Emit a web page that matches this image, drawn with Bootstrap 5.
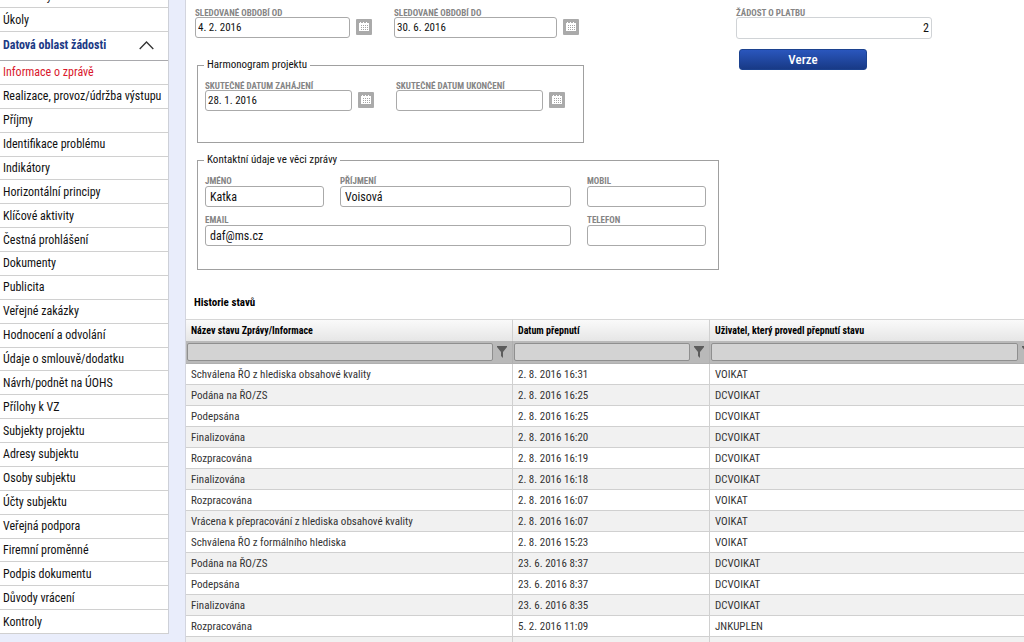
<!DOCTYPE html>
<html lang="cs">
<head>
<meta charset="utf-8">
<meta name="viewport" content="width=device-width, initial-scale=1">
<title>Informace o zprávě</title>
<link href="https://cdn.jsdelivr.net/npm/bootstrap@5.3.0/dist/css/bootstrap.min.css" rel="stylesheet">
<style>
body{font-family:"Roboto Condensed","Liberation Sans Narrow",Roboto,sans-serif;font-size:12px;line-height:16px;color:#111;background:#e9edfb}
.shell{height:100vh}
.side{width:169px}
.side-box{background:#fff;border-right:1px solid #cdd0d8}
.side-box a{color:#111;text-decoration:none;padding:0 3px;border-bottom:1px solid #d0d0d0;white-space:nowrap}
.side-top{height:24px}
.side-first{margin-top:-16px}
.side-box .side-head{height:29px;color:#1c3a85;font-weight:700;border-bottom:1px solid #a9a9ad;padding:0 14px 2px 3px}
.side-list{display:grid;grid-auto-rows:1fr;height:573px}
.side-list a.current{color:#d9182d}
.main-pane{margin-left:16px;background:#fff;border-left:1px solid #d3d5de}
.form-area{padding:8px 0 0 9px}
.lbl{display:block;font-size:9px;line-height:11px;height:9px;font-weight:700;color:#858585;text-transform:uppercase;white-space:nowrap}
.g2 .lbl{height:10px}
.box{display:block;width:100%;height:21px;border:1px solid #aaa;border-radius:3px;padding:0 2px;font-size:11px;line-height:16px;color:#111;background:#fff}
.box.inset{padding:0 4px;font-size:12px}
.pay .box{border-color:#d0d3d6;height:22px;font-size:12px}
.cal{width:16px;height:16px;padding:0;border:0;background:none;margin:0 0 3px 6px;line-height:0}
.cal-gap{margin-right:22px}
.d1{width:155px}.d2{width:163px}.d3{width:147px}
.pay{width:196px;margin-right:92px}
.btn.verze{width:128px;height:21px;padding:0;margin:10px 0 0 3px;border:1px solid #1c428f;border-radius:3px;color:#fff;font-size:13px;line-height:19px;font-weight:500;background:linear-gradient(#2a56bd,#183a86)}
.group{border:1px solid #a0a0a0;padding:0 12px 0 7px;margin:0 0 0 2px}
.group legend{float:none;width:auto;font-size:11px;line-height:16px;margin:0 0 0 -1px;padding:0 3px}
.g1{width:387px;height:86px;margin-top:-13px}
.g2{width:522px;height:118px;margin-top:9px}
.w-s{width:119px}
.history h2{font-size:11px;line-height:16px;font-weight:700;margin:25px 0 8px 8px;color:#000}
.grid-wrap{overflow:hidden}
.hist{width:calc(100% + 14px);table-layout:fixed;border-collapse:separate;border-spacing:0;font-size:11px;line-height:16px;color:#333}
.hist th,.hist td{padding:0 5px;height:21px;border-bottom:1px solid #d0d0d0;border-right:1px solid #d0d0d0;white-space:nowrap}
.hist .heads th{border-top:1px solid #d6d6d6;border-bottom:0;height:22px;font-size:10px;font-weight:700;color:#000;background:linear-gradient(#fafafa,#e6e6e6)}
.hist .filters td{height:23px;padding:0 5px 0 1px;background:#b9b9b9;border-color:#b0b0b0}
.hist tbody tr:nth-child(even){background:#f1f1f1}
.hist tbody td{padding-top:1px}
.c1{width:327px}.c2{width:197px}
.filter-box{height:18px;border:1px solid #8f8f8f;border-radius:2px;background:#d3d3d3;min-width:0;width:100%;padding:0 3px}
.funnel{padding:0;border:0;background:none;line-height:0}
</style>
</head>
<body class="overflow-hidden">
<svg class="d-none">
<symbol id="cal" viewBox="0 0 16 16"><rect width="16" height="16" rx="1" fill="#aaa"/><path d="M3 4h1V3h1v1h2V3h1v1h2V3h1v1h2v8H3z" fill="#fff"/><path d="M5 6h1v1H5zm2 0h1v1H7zm2 0h1v1H9zm2 0h1v1h-1zM5 8h1v1H5zm2 0h1v1H7zm2 0h1v1H9zm2 0h1v1h-1zM5 10h1v1H5zm2 0h1v1H7zm2 0h1v1H9zm2 0h1v1h-1z" fill="#a5a5a5"/></symbol>
<symbol id="funnel" viewBox="0 0 10 12"><path d="M0 0h10v1L6 6v6L4 10V6L0 1z" fill="#5c5c5c"/></symbol>
</svg>
<div class="shell d-flex">
<aside class="side flex-shrink-0">
<nav class="side-box d-flex flex-column" aria-label="Navigace">
<a href="#" class="side-top side-first d-flex align-items-center flex-shrink-0">Poznámky</a>
<a href="#" class="side-top d-flex align-items-center">Úkoly</a>
<a href="#" class="side-head d-flex align-items-center justify-content-between">Datová oblast žádosti<svg width="15" height="9" viewBox="0 0 15 9" fill="none" stroke="#333" stroke-width="1.3"><path d="M.7 8 7.5 1l6.8 7"/></svg></a>
<div class="side-list" id="side"></div>
</nav>
</aside>
<main class="main-pane flex-grow-1 overflow-hidden">
<form class="form-area" onsubmit="return false">
<div class="d-flex justify-content-between align-items-start">
<div class="d-flex align-items-end">
<div class="d1"><label class="lbl" for="od">Sledované období od</label><input class="box" id="od" value="4. 2. 2016"></div>
<button class="cal cal-gap" type="button" aria-label="Kalendář"><svg width="16" height="16"><use href="#cal"/></svg></button>
<div class="d2"><label class="lbl" for="do">Sledované období do</label><input class="box" id="do" value="30. 6. 2016"></div>
<button class="cal" type="button" aria-label="Kalendář"><svg width="16" height="16"><use href="#cal"/></svg></button>
</div>
<div class="pay"><label class="lbl" for="zop">Žádost o platbu</label><input class="box text-end" id="zop" value="2"><button class="btn verze d-block" type="button">Verze</button></div>
</div>
<fieldset class="group g1"><legend>Harmonogram projektu</legend>
<div class="d-flex align-items-end mt-2">
<div class="d3"><label class="lbl" for="zah">Skutečné datum zahájení</label><input class="box" id="zah" value="28. 1. 2016"></div>
<button class="cal cal-gap" type="button" aria-label="Kalendář"><svg width="16" height="16"><use href="#cal"/></svg></button>
<div class="d3"><label class="lbl" for="uk">Skutečné datum ukončení</label><input class="box" id="uk"></div>
<button class="cal" type="button" aria-label="Kalendář"><svg width="16" height="16"><use href="#cal"/></svg></button>
</div></fieldset>
<fieldset class="group g2"><legend>Kontaktní údaje ve věci zprávy</legend>
<div class="d-flex gap-3 mt-2">
<div class="w-s"><label class="lbl" for="jm">Jméno</label><input class="box inset" id="jm" value="Katka"></div>
<div class="flex-grow-1"><label class="lbl" for="pr">Příjmení</label><input class="box inset" id="pr" value="Voisová"></div>
<div class="w-s"><label class="lbl" for="mo">Mobil</label><input class="box inset" id="mo"></div>
</div>
<div class="d-flex gap-3 mt-2">
<div class="flex-grow-1"><label class="lbl" for="em">Email</label><input class="box inset" id="em" value="daf@ms.cz"></div>
<div class="w-s"><label class="lbl" for="te">Telefon</label><input class="box inset" id="te"></div>
</div></fieldset>
</form>
<section class="history">
<h2>Historie stavů</h2>
<div class="grid-wrap">
<table class="hist">
<colgroup><col class="c1"><col class="c2"><col></colgroup>
<thead>
<tr class="heads"><th>Název stavu Zprávy/Informace</th><th>Datum přepnutí</th><th>Uživatel, který provedl přepnutí stavu</th></tr>
<tr class="filters" id="filters"></tr>
</thead>
<tbody id="rows"></tbody>
</table>
</div>
</section>
</main>
</div>
<script>
const items=["Informace o zprávě","Realizace, provoz/údržba výstupu","Příjmy","Identifikace problému","Indikátory","Horizontální principy","Klíčové aktivity","Čestná prohlášení","Dokumenty","Publicita","Veřejné zakázky","Hodnocení a odvolání","Údaje o smlouvě/dodatku","Návrh/podnět na ÚOHS","Přílohy k VZ","Subjekty projektu","Adresy subjektu","Osoby subjektu","Účty subjektu","Veřejná podpora","Firemní proměnné","Podpis dokumentu","Důvody vrácení","Kontroly"];
document.getElementById("side").innerHTML=items.map((t,i)=>`<a href="#" class="d-flex align-items-center${i?"":" current"}">${t}</a>`).join("");
document.getElementById("filters").innerHTML=["Název stavu","Datum přepnutí","Uživatel"].map(t=>`<td><div class="d-flex align-items-center gap-1"><input class="filter-box" aria-label="${t}"><button class="funnel" type="button" aria-label="Filtr"><svg width="10" height="12"><use href="#funnel"/></svg></button></div></td>`).join("");
const rows=[["Schválena ŘO z hlediska obsahové kvality","2. 8. 2016 16:31","VOIKAT"],["Podána na ŘO/ZS","2. 8. 2016 16:25","DCVOIKAT"],["Podepsána","2. 8. 2016 16:25","DCVOIKAT"],["Finalizována","2. 8. 2016 16:20","DCVOIKAT"],["Rozpracována","2. 8. 2016 16:19","DCVOIKAT"],["Finalizována","2. 8. 2016 16:18","DCVOIKAT"],["Rozpracována","2. 8. 2016 16:07","VOIKAT"],["Vrácena k přepracování z hlediska obsahové kvality","2. 8. 2016 16:07","VOIKAT"],["Schválena ŘO z formálního hlediska","2. 8. 2016 15:23","VOIKAT"],["Podána na ŘO/ZS","23. 6. 2016 8:37","DCVOIKAT"],["Podepsána","23. 6. 2016 8:37","DCVOIKAT"],["Finalizována","23. 6. 2016 8:35","DCVOIKAT"],["Rozpracována","5. 2. 2016 11:09","JNKUPLEN"],["","",""]];
document.getElementById("rows").innerHTML=rows.map(r=>"<tr>"+r.map(c=>`<td>${c}</td>`).join("")+"</tr>").join("");
</script>
<script src="https://cdn.jsdelivr.net/npm/bootstrap@5.3.0/dist/js/bootstrap.bundle.min.js"></script>
</body>
</html>
